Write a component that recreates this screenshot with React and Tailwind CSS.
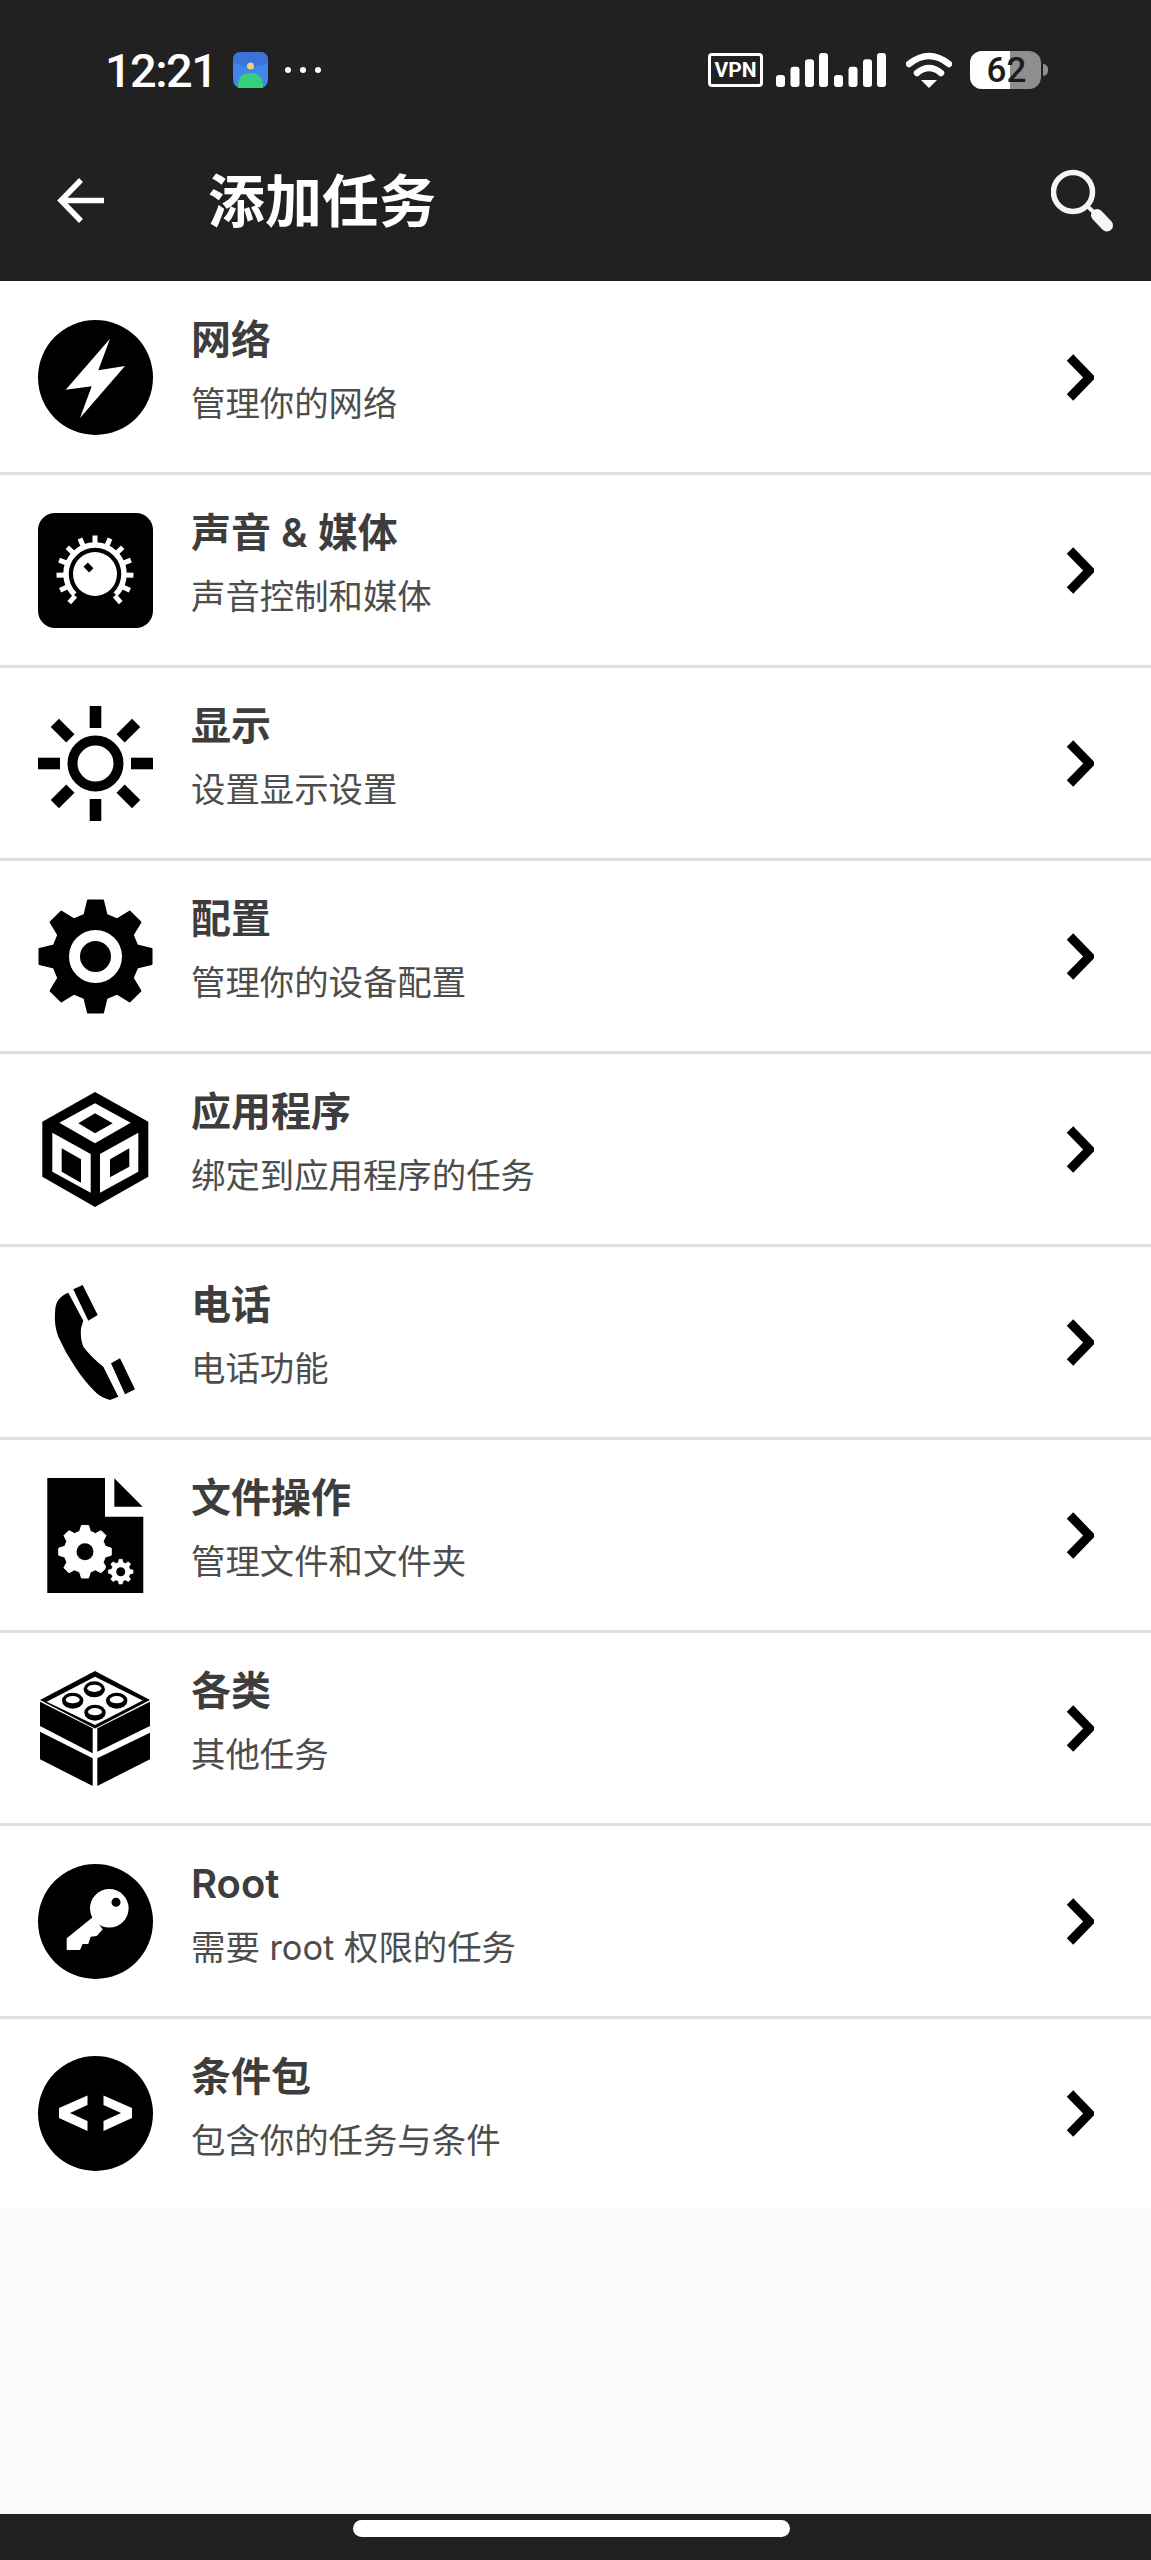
import React from 'react';

// builds a gear outline, teeth point up at angle 0
const gearPath = (cx, cy, outer, root, teeth) => {
  const pts = [];
  const step = (Math.PI * 2) / teeth;
  for (let i = 0; i < teeth; i++) {
    const a = i * step - Math.PI / 2;
    const at = (r, d) => `${(cx + r * Math.cos(a + d)).toFixed(2)} ${(cy + r * Math.sin(a + d)).toFixed(2)}`;
    pts.push(at(root, -step * 0.33), at(outer, -step * 0.17), at(outer, step * 0.17), at(root, step * 0.33));
  }
  return 'M' + pts.join('L') + 'Z';
};

const Icon = ({ children }) => (
  <svg viewBox="0 0 115 115" className="w-[115px] h-[115px] shrink-0">{children}</svg>
);

const BoltIcon = () => (
  <Icon>
    <circle cx="57.5" cy="57.5" r="57.5" fill="#000" />
    <polygon points="72,18.7 27.7,69.7 53.7,66.3 42,98 87,46 60.3,50.3" fill="#fff" />
  </Icon>
);

const KnobIcon = () => (
  <Icon>
    <rect width="115" height="115" rx="17" fill="#000" />
    <circle cx="57" cy="61" r="22" fill="#fff" />
    <path d="M36.5 81.5A29 29 0 1 1 77.5 81.5" fill="none" stroke="#fff" strokeWidth="5.5" />
    {[-138, -115, -92, -69, -46, -23, 0, 23, 46, 69, 92, 115, 138].map((a) => (
      <rect key={a} x="54.5" y="22.5" width="5" height="9" fill="#fff" transform={`rotate(${a} 57 61)`} />
    ))}
    <rect x="47.5" y="50.5" width="6" height="8" fill="#000" transform="rotate(-45 50.5 54.5)" />
  </Icon>
);

const SunIcon = () => (
  <Icon>
    <circle cx="57.5" cy="57.5" r="23" fill="none" stroke="#000" strokeWidth="10" />
    {[0, 45, 90, 135, 180, 225, 270, 315].map((a) => (
      <rect key={a} x="51.7" y="0" width="11.6" height="22" fill="#000" transform={`rotate(${a} 57.5 57.5)`} />
    ))}
  </Icon>
);

const GearIcon = () => (
  <Icon>
    <path d={gearPath(57.5, 57.5, 56.5, 43, 8)} fill="#000" stroke="#000" strokeWidth="2" strokeLinejoin="round" />
    <circle cx="57.5" cy="57.5" r="21" fill="none" stroke="#fff" strokeWidth="11" />
  </Icon>
);

const CubeIcon = () => (
  <Icon>
    <polygon points="57,0 110.3,29.7 110.3,84.7 57,115 4.3,84.7 4.3,29.7" fill="#000" />
    <polygon points="57,11.3 92.7,30.7 57,51.3 21.3,30.7" fill="#fff" />
    <polygon points="14.3,40.7 52.7,62 52.7,100.7 14.3,79.7" fill="#fff" />
    <polygon points="100.3,40.7 62,62 62,100.7 100.3,79.7" fill="#fff" />
    <polygon points="57,21.3 74.7,31.3 57,41.3 40.3,31.3" fill="#000" />
    <polygon points="23.7,56.3 43,67.3 43,90.7 23.7,79.7" fill="#000" />
    <polygon points="91.3,56.3 72,67.3 72,85.3 91.3,74.7" fill="#000" />
  </Icon>
);

const PhoneIcon = () => (
  <Icon>
    <path
      d="M30.3 7.7L45.3 35.7L43 43.3Q42 53 45.3 61.7Q54 73 65.3 81.7L80.3 111.7L72 115Q64 113 58.7 108.3Q46 96 37 81.7Q27 67 20.3 51.7Q16 40 17 28.3Q17 20 20.3 15Q24 10 30.3 7.7Z"
      fill="#000"
    />
    <polygon points="35.3,4.3 44.7,0 59.7,30 50.3,35.7" fill="#000" />
    <polygon points="73,78.3 82,73.3 97,104.3 87,109.3" fill="#000" />
  </Icon>
);

const FileIcon = () => (
  <Icon>
    <polygon points="9.3,0 67,0 67,38.7 105.3,38.7 105.3,115 9.3,115" fill="#000" />
    <polygon points="76.3,0.3 104.7,28.7 76.3,28.7" fill="#000" />
    <path d={gearPath(47, 73.7, 26.5, 21, 8)} fill="#fff" stroke="#fff" strokeWidth="1" strokeLinejoin="round" />
    <circle cx="47" cy="73.7" r="8.5" fill="#000" />
    <circle cx="82.7" cy="93.7" r="15.5" fill="#000" />
    <path d={gearPath(82.7, 93.7, 12.5, 9.5, 8)} fill="#fff" stroke="#fff" strokeWidth="0.5" strokeLinejoin="round" />
    <circle cx="82.7" cy="93.7" r="4.5" fill="#000" />
  </Icon>
);

const BrickIcon = () => (
  <Icon>
    <polygon points="57,0 112,29 57,57.5 2,29" fill="#000" />
    <polygon points="57,5.7 104.7,29.5 57,54 8.7,30.7" fill="#fff" />
    {[
      [56.3, 18.3],
      [34.7, 29.7],
      [78.7, 29.7],
      [57, 41.7],
    ].map(([x, y]) => (
      <g key={`${x}-${y}`}>
        <ellipse cx={x} cy={y} rx="10.7" ry="8" fill="#000" />
        <ellipse cx={x} cy={y - 1} rx="7" ry="3.6" fill="#fff" />
      </g>
    ))}
    <polygon points="2,30.7 54.7,57.3 54.7,82.3 2,55" fill="#000" />
    <polygon points="2,60.7 54.7,87.3 54.7,115 2,88.3" fill="#000" />
    <polygon points="112,30.7 59.3,57.3 59.3,80.7 112,55" fill="#000" />
    <polygon points="112,61.7 59.3,87.3 59.3,115 112,88.3" fill="#000" />
  </Icon>
);

const KeyIcon = () => (
  <Icon>
    <circle cx="57.5" cy="57.5" r="57.5" fill="#000" />
    <circle cx="71.3" cy="44.3" r="19.3" fill="#fff" />
    <circle cx="78" cy="38.3" r="4.5" fill="#000" />
    <polygon points="55.3,52.7 28.7,74.3 28.7,86 42,86 44.7,80 50.3,80 52.7,72.7 58.7,72 64.7,65.3" fill="#fff" />
  </Icon>
);

const CodeIcon = () => (
  <Icon>
    <circle cx="57.5" cy="57.5" r="57.5" fill="#000" />
    <polygon points="21,52 49.5,39.5 49.5,49 32,57 49.5,65 49.5,75 21,62" fill="#fff" />
    <polygon points="94,52 65.5,39.5 65.5,49 83,57 65.5,65 65.5,75 94,62" fill="#fff" />
  </Icon>
);

const tasks = [
  { title: '网络', sub: '管理你的网络', icon: <BoltIcon /> },
  { title: '声音 & 媒体', sub: '声音控制和媒体', icon: <KnobIcon /> },
  { title: '显示', sub: '设置显示设置', icon: <SunIcon /> },
  { title: '配置', sub: '管理你的设备配置', icon: <GearIcon /> },
  { title: '应用程序', sub: '绑定到应用程序的任务', icon: <CubeIcon /> },
  { title: '电话', sub: '电话功能', icon: <PhoneIcon /> },
  { title: '文件操作', sub: '管理文件和文件夹', icon: <FileIcon /> },
  { title: '各类', sub: '其他任务', icon: <BrickIcon /> },
  { title: 'Root', sub: '需要 root 权限的任务', icon: <KeyIcon /> },
  { title: '条件包', sub: '包含你的任务与条件', icon: <CodeIcon /> },
];

const StatusBar = () => (
  <div className="h-[140px] flex items-center pl-[105px] pr-[103px] text-white">
    <span className="text-[47px] leading-none font-medium tracking-[-1.6px] w-[106px] whitespace-nowrap">12:21</span>
    <svg viewBox="0 0 35 36" className="w-[35px] h-[36px] ml-[22px]">
      <rect width="35" height="36" rx="8" fill="#4285e8" />
      <path d="M0 8Q0 0 8 0H27Q35 0 35 8V11Q17.5 18 0 11Z" fill="#3a74d8" />
      <path d="M5 36Q4 21 17.5 21Q31 21 30 36Z" fill="#35d07c" />
      <circle cx="17.5" cy="14" r="3.5" fill="#e8d27a" />
    </svg>
    <div className="flex items-center gap-[9px] ml-[17px]">
      <span className="w-[6px] h-[6px] rounded-full bg-white" />
      <span className="w-[6px] h-[6px] rounded-full bg-white" />
      <span className="w-[6px] h-[6px] rounded-full bg-white" />
    </div>
    <div className="ml-auto flex items-center">
      <span className="w-[55px] h-[34px] border-[3px] border-white rounded-[4px] flex items-center justify-center text-[21px] leading-none font-bold">
        VPN
      </span>
      <svg viewBox="0 0 110 34" className="w-[110px] h-[34px] ml-[13px]" fill="#fff">
        <rect x="0" y="22" width="9" height="12" rx="3" />
        <rect x="14.5" y="13.7" width="9" height="20.3" rx="3" />
        <rect x="29" y="6.3" width="9" height="27.7" rx="3" />
        <rect x="43" y="0" width="9" height="34" rx="3" />
        <rect x="58" y="22" width="9" height="12" rx="3" />
        <rect x="72.5" y="13.7" width="9" height="20.3" rx="3" />
        <rect x="87" y="6.3" width="9" height="27.7" rx="3" />
        <rect x="101" y="0" width="9" height="34" rx="3" />
      </svg>
      <svg viewBox="0 0 46 36" className="w-[46px] h-[36px] ml-[20px]">
        <path d="M3 12Q23 -4 43 12" fill="none" stroke="#fff" strokeWidth="6.5" strokeLinecap="round" />
        <path d="M11 21Q23 11 35 21" fill="none" stroke="#fff" strokeWidth="6.5" strokeLinecap="round" />
        <polygon points="15,28 31,28 23,36" fill="#fff" />
      </svg>
      <div className="relative w-[71px] h-[38px] ml-[18px] rounded-[12px] overflow-hidden bg-[#8f8f8f]">
        <div className="h-full w-[40px] bg-white" />
        <span className="absolute inset-0 flex items-center justify-center pl-[2px] text-[35px] leading-none font-medium text-[#1c1c1c]">
          62
        </span>
      </div>
      <span className="w-[5px] h-[12px] ml-[2px] rounded-r-full bg-[#8f8f8f]" />
    </div>
  </div>
);

const Toolbar = () => (
  <div className="h-[141px] flex items-center pl-[57px] pr-[38px] pb-[20px] text-white">
    <svg viewBox="0 0 47 45" className="w-[47px] h-[45px]" fill="none" stroke="#fff" strokeWidth="5.5">
      <path d="M47 22.5H4" />
      <path d="M24 2L4 22.5L24 43" />
    </svg>
    <h1 className="ml-[104px] mt-[4px] text-[57px] leading-none font-semibold whitespace-nowrap">添加任务</h1>
    <svg viewBox="0 0 62 63" className="ml-auto w-[62px] h-[63px]" fill="none" stroke="#f5f5f5">
      <circle cx="22" cy="23" r="19.5" strokeWidth="5.5" />
      <path d="M36 37L46 46" strokeWidth="4" />
      <path d="M46 46L56 56.5" strokeWidth="12" strokeLinecap="round" />
    </svg>
  </div>
);

const TaskRow = ({ task, last }) => (
  <div className={`flex items-center pl-[38px] pr-[57px] bg-white ${last ? 'h-[189px]' : 'h-[193px] border-b-[3px] border-[#dedede]'}`}>
    {task.icon}
    <div className="ml-[38px] flex-1 flex flex-col pb-[10px] font-['Inter','Noto_Sans_CJK_SC',sans-serif]">
      <span className="text-[40px] leading-[50px] font-semibold text-[#3d3d3d]">{task.title}</span>
      <span className="mt-[14px] text-[34.4px] leading-[50px] text-[#4d4d4d]">{task.sub}</span>
    </div>
    <svg viewBox="0 0 28 47" className="w-[28px] h-[47px]" fill="none" stroke="#000" strokeWidth="9">
      <path d="M4 3.5L23.5 23.5L4 43.5" />
    </svg>
  </div>
);

export default function App() {
  return (
    <div className="h-[2560px] flex flex-col bg-[#fafafa] font-['Roboto','Noto_Sans_CJK_SC',sans-serif]">
      <div className="bg-[#212121]">
        <StatusBar />
        <Toolbar />
      </div>
      <div className="pt-px bg-white">
        {tasks.map((task, i) => (
          <TaskRow key={task.title} task={task} last={i === tasks.length - 1} />
        ))}
      </div>
      <div className="mt-auto h-[46px] bg-[#212121] flex pl-[353px] pt-[6px]">
        <div className="w-[437px] h-[17px] rounded-full bg-white" />
      </div>
    </div>
  );
}
